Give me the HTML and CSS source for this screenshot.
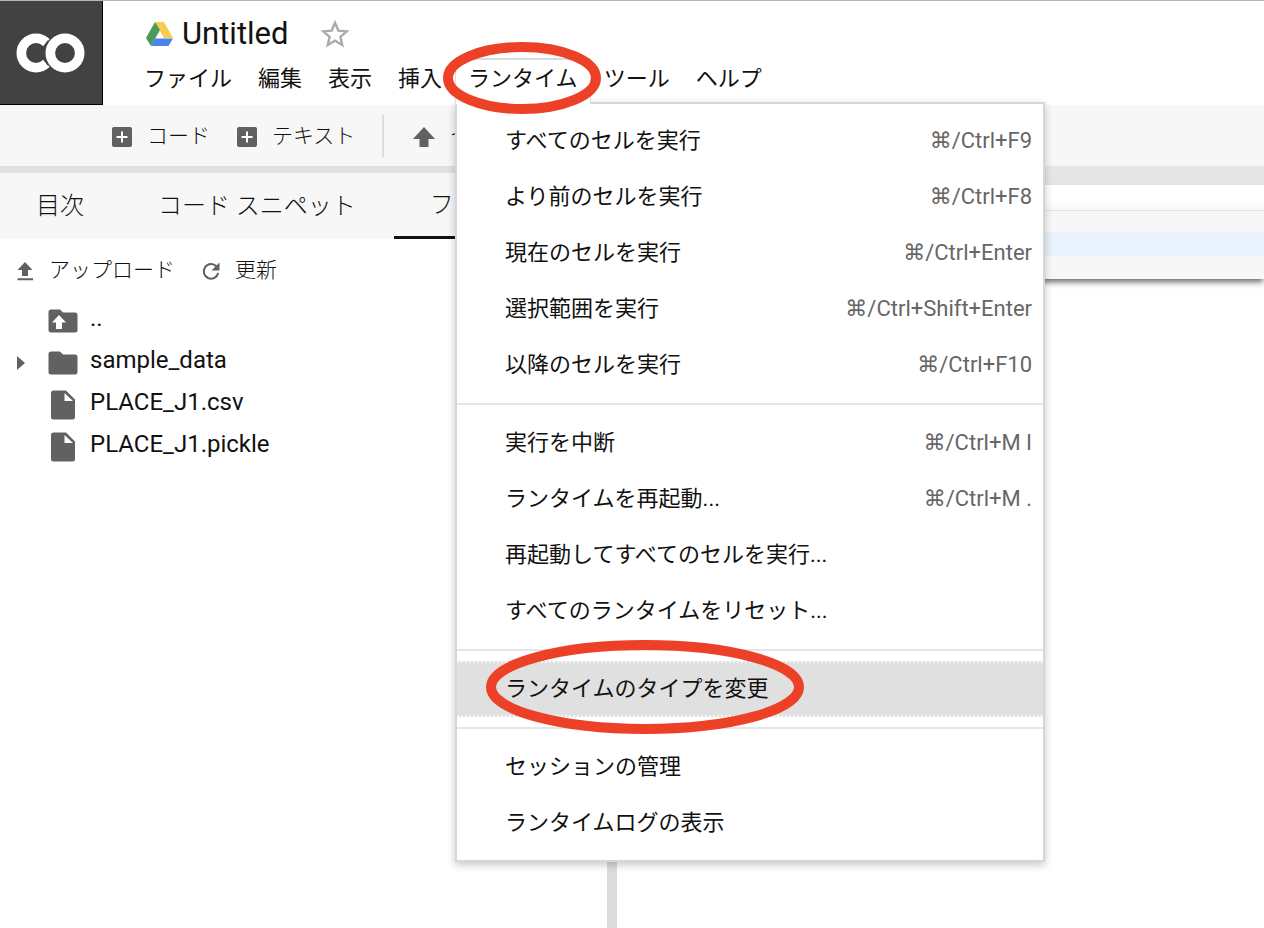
FILE: index.html
```html
<!DOCTYPE html>
<html lang="ja">
<head>
<meta charset="utf-8">
<title>Untitled</title>
<link rel="stylesheet" href="styles.css">
</head>
<body>
<header class="header">
  <a class="logo" href="#" aria-label="Colaboratory">
    <svg class="logo-mark" viewBox="0 0 70 40" aria-hidden="true">
      <circle cx="20" cy="20" r="14.7" fill="none" stroke="#fff" stroke-width="9.6"/>
      <path d="M22 20 L32 33 L40 20 L32 7 Z" fill="#424242"/>
      <circle cx="49" cy="20" r="20.7" fill="#424242"/>
      <circle cx="49" cy="20" r="14.7" fill="none" stroke="#fff" stroke-width="9.6"/>
    </svg>
  </a>
  <div class="header-main">
    <div class="title-row">
      <svg class="drive" viewBox="0 0 28 24" aria-hidden="true">
        <path d="M9 0h9l9 16h-9z" fill="#f7cb4d"/>
        <path d="M9 0l5 8L5 24 0 16z" fill="#4a9a5c"/>
        <path d="M9 16.500h18L22.500 24H5z" fill="#4a83ec"/>
      </svg>
      <h1 class="title">Untitled</h1>
      <button class="star" aria-label="スター">
        <svg viewBox="0 0 28 28" aria-hidden="true"><path d="M14 3.500l3.100 7.300 7.900.7-6 5.200 1.800 7.700-6.800-4.100-6.800 4.100L9 16.700l-6-5.200 7.900-.7z" fill="none" stroke="#aaa" stroke-width="2.200"/></svg>
      </button>
    </div>
    <nav class="menubar">
      <button class="menubar-item">ファイル</button>
      <button class="menubar-item">編集</button>
      <button class="menubar-item">表示</button>
      <button class="menubar-item">挿入</button>
      <div class="menu-anchor">
        <button class="menubar-item menubar-open" aria-expanded="true">ランタイム</button>
        <div class="menu" role="menu">
          <button class="menu-item" role="menuitem"><span>すべてのセルを実行</span><kbd>⌘/Ctrl+F9</kbd></button>
          <button class="menu-item" role="menuitem"><span>より前のセルを実行</span><kbd>⌘/Ctrl+F8</kbd></button>
          <button class="menu-item" role="menuitem"><span>現在のセルを実行</span><kbd>⌘/Ctrl+Enter</kbd></button>
          <button class="menu-item" role="menuitem"><span>選択範囲を実行</span><kbd>⌘/Ctrl+Shift+Enter</kbd></button>
          <button class="menu-item" role="menuitem"><span>以降のセルを実行</span><kbd>⌘/Ctrl+F10</kbd></button>
          <hr class="menu-separator">
          <button class="menu-item" role="menuitem"><span>実行を中断</span><kbd>⌘/Ctrl+M I</kbd></button>
          <button class="menu-item" role="menuitem"><span>ランタイムを再起動...</span><kbd>⌘/Ctrl+M .</kbd></button>
          <button class="menu-item" role="menuitem"><span>再起動してすべてのセルを実行...</span></button>
          <button class="menu-item" role="menuitem"><span>すべてのランタイムをリセット...</span></button>
          <hr class="menu-separator">
          <button class="menu-item menu-item-active" role="menuitem"><span>ランタイムのタイプを変更</span>
            <svg class="ring ring-item" viewBox="0 0 318 96" aria-hidden="true"><ellipse cx="159" cy="48" rx="154" ry="42"/></svg>
          </button>
          <hr class="menu-separator">
          <button class="menu-item" role="menuitem"><span>セッションの管理</span></button>
          <button class="menu-item" role="menuitem"><span>ランタイムログの表示</span></button>
        </div>
        <svg class="ring ring-tab" viewBox="0 0 158 72" aria-hidden="true"><ellipse cx="79" cy="36" rx="74" ry="31"/></svg>
      </div>
      <button class="menubar-item">ツール</button>
      <button class="menubar-item">ヘルプ</button>
    </nav>
  </div>
</header>

<div class="toolbar">
  <button class="tool">
    <svg class="icon-add" viewBox="0 0 20 20" aria-hidden="true"><rect width="20" height="20" rx="2" fill="#616161"/><path d="M10 4.500v11M4.500 10h11" stroke="#fff" stroke-width="2"/></svg>
    コード
  </button>
  <button class="tool">
    <svg class="icon-add" viewBox="0 0 20 20" aria-hidden="true"><rect width="20" height="20" rx="2" fill="#616161"/><path d="M10 4.500v11M4.500 10h11" stroke="#fff" stroke-width="2"/></svg>
    テキスト
  </button>
  <span class="tool-divider"></span>
  <button class="tool">
    <svg class="icon-up" viewBox="0 0 22 20" aria-hidden="true"><path d="M11 0l11 12h-6.500v8h-9v-8H0z" fill="#616161"/></svg>
    セ
  </button>
</div>

<div class="workspace">
  <aside class="sidebar">
    <div class="tabs" role="tablist">
      <button class="tab" role="tab">目次</button>
      <button class="tab" role="tab">コード スニペット</button>
      <button class="tab tab-active" role="tab" aria-selected="true">フ</button>
    </div>
    <div class="file-actions">
      <button class="file-action">
        <svg class="icon-action" viewBox="0 0 18 20" aria-hidden="true"><path d="M9 1l7.500 8H12v6H6V9H1.500zM1.500 17.200h15.500v2H1.500z" fill="#616161"/></svg>
        アップロード
      </button>
      <button class="file-action">
        <svg class="icon-action" viewBox="0 0 18 20" aria-hidden="true"><path d="M14.500 5.500A7.300 7.300 0 1 0 16.200 12" fill="none" stroke="#616161" stroke-width="2"/><path d="M17.500 1.500v8h-8z" fill="#616161"/></svg>
        更新
      </button>
    </div>
    <ul class="files">
      <li class="file">
        <svg class="icon-file" viewBox="0 0 30 30" aria-hidden="true"><path d="M3 3.500h9l3 3h12a2.500 2.500 0 0 1 2.500 2.500v15a2.500 2.500 0 0 1-2.500 2.500H3A2.500 2.500 0 0 1 .5 24V6A2.500 2.500 0 0 1 3 3.500z" fill="#616161"/><path d="M11 9l7 7.500h-4V23H8v-6.500H4z" fill="#fff"/></svg>
        <span>..</span>
      </li>
      <li class="file file-folder">
        <svg class="icon-expand" viewBox="0 0 8 14" aria-hidden="true"><path d="M0 0l8 7-8 7z" fill="#616161"/></svg>
        <svg class="icon-file" viewBox="0 0 30 30" aria-hidden="true"><path d="M3 3.500h9l3 3h12a2.500 2.500 0 0 1 2.500 2.500v15a2.500 2.500 0 0 1-2.500 2.500H3A2.500 2.500 0 0 1 .5 24V6A2.500 2.500 0 0 1 3 3.500z" fill="#616161"/></svg>
        <span>sample_data</span>
      </li>
      <li class="file">
        <svg class="icon-file" viewBox="0 0 30 30" aria-hidden="true"><path d="M5.500.5H18l9 9V27a2.500 2.500 0 0 1-2.500 2.500h-19A2.500 2.500 0 0 1 3 27V3A2.500 2.500 0 0 1 5.500.5z" fill="#616161"/><path d="M16.500 3v8H25z" fill="#fff"/></svg>
        <span>PLACE_J1.csv</span>
      </li>
      <li class="file">
        <svg class="icon-file" viewBox="0 0 30 30" aria-hidden="true"><path d="M5.500.5H18l9 9V27a2.500 2.500 0 0 1-2.500 2.500h-19A2.500 2.500 0 0 1 3 27V3A2.500 2.500 0 0 1 5.500.5z" fill="#616161"/><path d="M16.500 3v8H25z" fill="#fff"/></svg>
        <span>PLACE_J1.pickle</span>
      </li>
    </ul>
  </aside>
  <div class="splitter"></div>
  <main class="notebook">
    <div class="cell">
      <div class="cell-head"></div>
      <div class="cell-editor"><div class="cell-line"></div></div>
    </div>
  </main>
</div>
</body>
</html>
```
FILE: styles.css
```css
* {
  box-sizing: border-box;
}

body {
  margin: 0;
  min-height: 100vh;
  display: flex;
  flex-direction: column;
  background: #fff;
  color: #111;
  font-family: Roboto, "Noto Sans CJK JP", sans-serif;
  font-size: 22px;
  line-height: 32px;
  overflow: hidden;
}

button {
  margin: 0;
  padding: 0;
  border: 0;
  background: none;
  color: inherit;
  font: inherit;
  white-space: nowrap;
}

svg {
  display: block;
  flex: none;
}

.header {
  display: flex;
  border-top: 1px solid #b5b5b5;
}

.logo {
  display: flex;
  align-items: center;
  justify-content: center;
  width: 103px;
  height: 104px;
  background: #424242;
  border: solid #000;
  border-width: 0 1px 1px 0;
}

.logo-mark {
  width: 70px;
  height: 40px;
}

.header-main {
  display: flex;
  flex-direction: column;
  padding: 15px 0 0 28px;
}

.title-row {
  display: flex;
  align-items: center;
  height: 35px;
  padding-left: 15px;
}

.drive {
  width: 28px;
  height: 24px;
}

.title {
  margin: 0 31px 0 8px;
  font-size: 31px;
  font-weight: 400;
}

.star svg {
  width: 30px;
  height: 30px;
}

.menubar {
  display: flex;
  padding-top: 7px;
}

.menubar-item {
  height: 44px;
  padding: 0 13px 2px;
}

.menu-anchor {
  position: relative;
}

.menubar-open {
  position: relative;
  z-index: 2;
  height: 46px;
  border: solid #dcdcdc;
  border-width: 2px 1px 0;
  padding: 0 12px 6px;
  background: #fff;
}

.menu {
  position: absolute;
  z-index: 1;
  top: 44px;
  left: 0;
  width: 590px;
  padding: 9px 0;
  border: 2px solid #d6d6d6;
  background: #fff;
  box-shadow: 0 3px 8px rgba(0, 0, 0, 0.22);
}

.menu-item {
  position: relative;
  display: flex;
  align-items: center;
  justify-content: space-between;
  width: 100%;
  height: 56px;
  padding: 0 11px 1px 48px;
}

.menu-item-active {
  background: #e0e0e0;
  border-block: 2px dotted #f4f4f4;
}

.menu-item kbd {
  color: #666;
  font-family: Roboto, "DejaVu Sans", sans-serif;
  font-size: 22px;
}

.menu-separator {
  height: 2px;
  margin: 10px 0;
  border: 0;
  background: #e6e6e6;
}

.ring {
  position: absolute;
  z-index: 3;
  overflow: visible;
  fill: none;
  stroke: #ec4126;
  stroke-width: 10;
  pointer-events: none;
}

.ring-tab {
  top: -16px;
  left: -12px;
  width: 158px;
  height: 72px;
}

.ring-item {
  top: -24px;
  left: 29px;
  width: 318px;
  height: 96px;
}

.toolbar {
  display: flex;
  align-items: center;
  height: 61px;
  padding-left: 112px;
  background: #f7f7f7;
  color: #111;
  font-size: 21px;
  font-weight: 300;
}

.tool {
  display: flex;
  align-items: center;
  gap: 15px;
  margin-right: 27px;
}

.icon-add {
  width: 20px;
  height: 20px;
  margin-top: 2px;
}

.tool-divider {
  width: 2px;
  height: 42px;
  margin-right: 29px;
  background: #dedede;
}

.icon-up {
  width: 22px;
  height: 20px;
  margin-top: 2px;
}

.workspace {
  display: flex;
  flex: 1;
}

.sidebar {
  width: 48%;
  border-top: 7px solid #e0e0e0;
}

.tabs {
  display: flex;
  gap: 2px;
  height: 66px;
  background: #f7f7f7;
  color: #111;
  font-size: 24px;
  font-weight: 300;
}

.tab {
  padding: 0 36px;
}

.tab-active {
  border-bottom: 3px solid #111;
}

.file-actions {
  display: flex;
  gap: 27px;
  height: 61px;
  padding-left: 16px;
  color: #111;
  font-size: 21px;
  font-weight: 300;
}

.file-action {
  display: flex;
  align-items: center;
  gap: 15px;
}

.icon-action {
  width: 18px;
  height: 20px;
  margin-top: 2px;
}

.files {
  margin: 0;
  padding: 0;
  list-style: none;
  font-size: 24px;
}

.file {
  display: flex;
  align-items: center;
  gap: 12px;
  height: 42px;
  padding-left: 48px;
}

.file span {
  padding-bottom: 7px;
}

.file-folder {
  padding-left: 17px;
}

.icon-expand {
  width: 8px;
  height: 14px;
  margin-right: 11px;
}

.icon-file {
  width: 30px;
  height: 30px;
}

.splitter {
  width: 10px;
  background: #dcdcdc;
}

.notebook {
  flex: 1;
  border-top: 19px solid #e6e6e6;
}

.cell {
  box-shadow: 0 4px 6px -1px rgba(0, 0, 0, 0.6);
}

.cell-head {
  height: 26px;
  border-bottom: 1px solid #e4e4e4;
  background: linear-gradient(#fff 60%, #f7f7f7);
}

.cell-editor {
  padding: 21px 0 23px;
  background: #f7f7f7;
}

.cell-line {
  height: 24px;
  background: #e9f1fc;
}
```
